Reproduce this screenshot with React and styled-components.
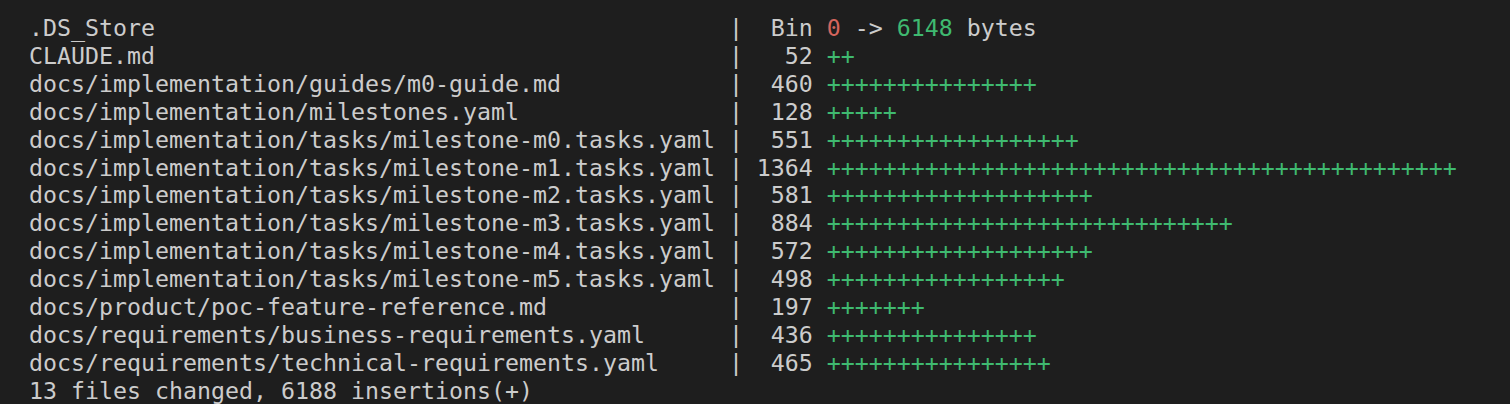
import React from "react";
import styled, { createGlobalStyle } from "styled-components";

const GlobalStyle = createGlobalStyle`
  html, body {
    margin: 0;
    padding: 0;
    background: #1e1e1e;
  }
`;

const Terminal = styled.div`
  box-sizing: border-box;
  width: 1510px;
  height: 404px;
  padding: 14px 0 0 15px;
  background: #1e1e1e;
  color: #cccccc;
  font-family: "DejaVu Sans Mono", Menlo, "Liberation Mono", monospace;
  font-size: 23.25px;
  line-height: 27.9px;
  overflow: hidden;
`;

const Row = styled.div`
  display: flex;
  white-space: pre;
`;

const FileName = styled.span`
  flex: 0 0 51ch;
`;

const Pipe = styled.span`
  flex: 0 0 1ch;
`;

const Count = styled.span`
  flex: 0 0 5ch;
  text-align: right;
`;

const Graph = styled.span`
  margin-left: 1ch;
  color: ${(p) => (p.$tone === "plain" ? "#cccccc" : "#3fb970")};
`;

const Removed = styled.span`
  color: #d4655d;
`;

const Added = styled.span`
  color: #3fb970;
`;

const Summary = styled.div`
  white-space: pre;
`;

const files = [
  ["docs/implementation/guides/m0-guide.md", 460],
  ["CLAUDE.md", 52],
  ["docs/implementation/milestones.yaml", 128],
  ["docs/implementation/tasks/milestone-m0.tasks.yaml", 551],
  ["docs/implementation/tasks/milestone-m1.tasks.yaml", 1364],
  ["docs/implementation/tasks/milestone-m2.tasks.yaml", 581],
  ["docs/implementation/tasks/milestone-m3.tasks.yaml", 884],
  ["docs/implementation/tasks/milestone-m4.tasks.yaml", 572],
  ["docs/implementation/tasks/milestone-m5.tasks.yaml", 498],
  ["docs/product/poc-feature-reference.md", 197],
  ["docs/requirements/business-requirements.yaml", 436],
  ["docs/requirements/technical-requirements.yaml", 465],
];

// CLAUDE.md comes before guides in git's sort order
const ordered = [files[1], files[0], ...files.slice(2)];

const maxCount = 1364;
const graphWidth = 45;
const bar = (n) => "+".repeat(Math.floor((n * (graphWidth - 1)) / maxCount) + 1);

export default function App() {
  return (
    <>
      <GlobalStyle />
      <Terminal>
        <Row>
          <FileName> .DS_Store</FileName>
          <Pipe>|</Pipe>
          <Count>Bin</Count>
          <Graph $tone="plain">
            <Removed>0</Removed> -&gt; <Added>6148</Added> bytes
          </Graph>
        </Row>
        {ordered.map(([name, n]) => (
          <Row key={name}>
            <FileName> {name}</FileName>
            <Pipe>|</Pipe>
            <Count>{n}</Count>
            <Graph>{bar(n)}</Graph>
          </Row>
        ))}
        <Summary> 13 files changed, 6188 insertions(+)</Summary>
      </Terminal>
    </>
  );
}
